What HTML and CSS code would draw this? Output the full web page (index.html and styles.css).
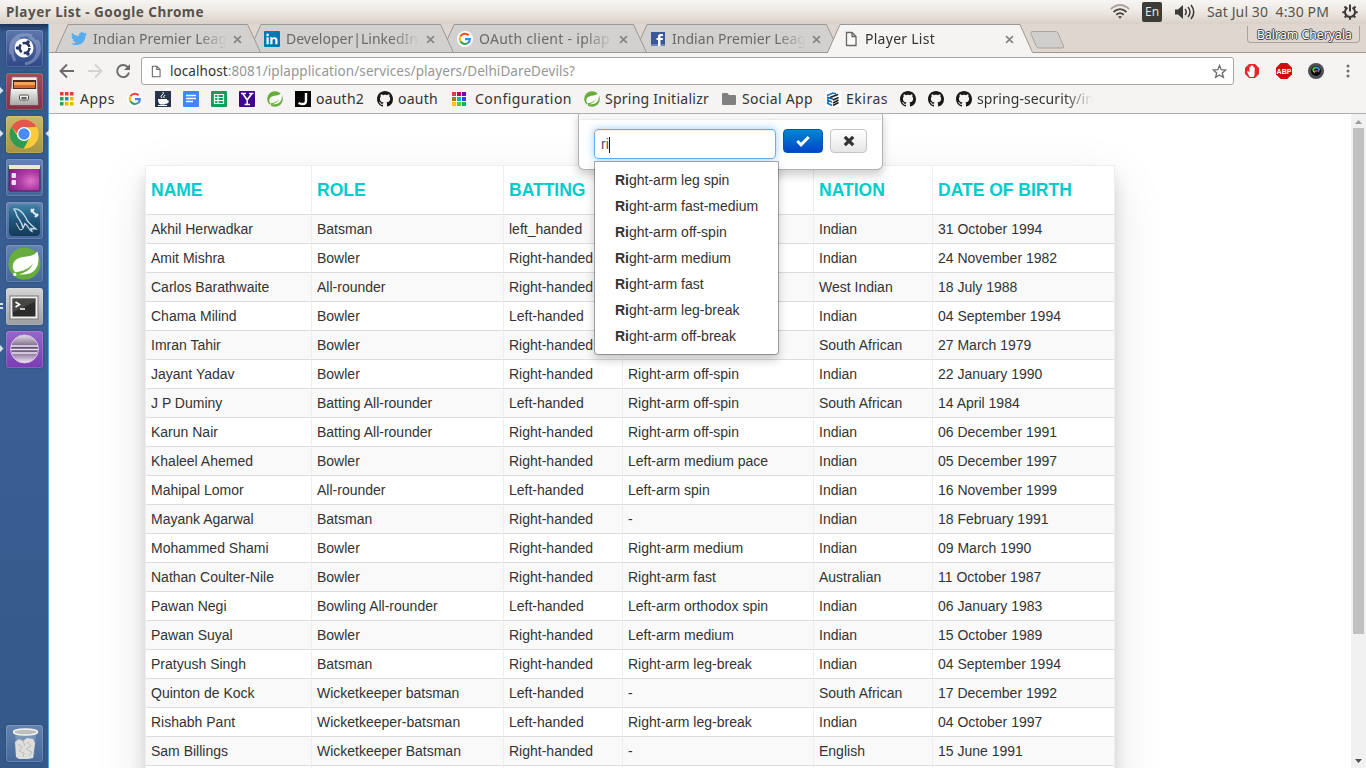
FILE: index.html
```html
<!DOCTYPE html>
<html lang="en">
<head>
<meta charset="utf-8">
<title>Player List</title>
<link rel="stylesheet" href="styles.css">
</head>
<body>
<svg class="defs" width="0" height="0">
  <defs>
    <linearGradient id="gSilver" x1="0" y1="0" x2="0" y2="1"><stop offset="0" stop-color="#f2f2f0"/><stop offset="1" stop-color="#a9a9a7"/></linearGradient>
    <radialGradient id="gPurple" cx=".7" cy=".6" r=".7"><stop offset="0" stop-color="#dc74c8"/><stop offset=".5" stop-color="#b03aa6"/><stop offset="1" stop-color="#86248c"/></radialGradient>
    <linearGradient id="gSea" x1="0" y1="0" x2="0" y2="1"><stop offset="0" stop-color="#3d82a6"/><stop offset=".5" stop-color="#1f5478"/><stop offset="1" stop-color="#143b58"/></linearGradient>
    <linearGradient id="gEcl" x1="0" y1="0" x2="0" y2="1"><stop offset="0" stop-color="#e4dbea"/><stop offset=".3" stop-color="#94869f"/><stop offset=".5" stop-color="#55456b"/><stop offset=".75" stop-color="#a894b6"/><stop offset="1" stop-color="#f3eaf6"/></linearGradient>
    <symbol id="github" viewBox="0 0 16 16"><path fill="#1b1817" d="M8 0C3.58 0 0 3.58 0 8c0 3.54 2.29 6.53 5.47 7.59.4.07.55-.17.55-.38 0-.19-.01-.82-.01-1.49-2.01.37-2.53-.49-2.69-.94-.09-.23-.48-.94-.82-1.13-.28-.15-.68-.52-.01-.53.63-.01 1.08.58 1.23.82.72 1.21 1.87.87 2.33.66.07-.52.28-.87.51-1.07-1.78-.2-3.64-.89-3.64-3.95 0-.87.31-1.59.82-2.15-.08-.2-.36-1.02.08-2.12 0 0 .67-.21 2.2.82.64-.18 1.32-.27 2-.27s1.36.09 2 .27c1.53-1.04 2.2-.82 2.2-.82.44 1.1.16 1.92.08 2.12.51.56.82 1.27.82 2.15 0 3.07-1.87 3.75-3.65 3.95.29.25.54.73.54 1.48 0 1.07-.01 1.93-.01 2.2 0 .21.15.46.55.38A8.01 8.01 0 0 0 16 8c0-4.42-3.58-8-8-8z"/></symbol>
    <symbol id="google" viewBox="0 0 16 16"><circle cx="8" cy="8" r="8" fill="#fff"/><path d="M3.5 5.2A5.2 5.2 0 0 1 11.6 4.3" fill="none" stroke="#ea4335" stroke-width="2.1"/><path d="M3.4 10.3A5.2 5.2 0 0 1 3.5 5.2" fill="none" stroke="#fbbc05" stroke-width="2.1"/><path d="M3.4 10.3A5.2 5.2 0 0 0 11.2 11.8" fill="none" stroke="#34a853" stroke-width="2.1"/><path d="M11.2 11.9A5 5 0 0 0 12.9 8.1H8" fill="none" stroke="#4285f4" stroke-width="2.1"/></symbol>
    <symbol id="spring" viewBox="0 0 16 16"><circle cx="8" cy="8" r="7.8" fill="#67ad3c"/><path fill="#fff" d="M14.2 2C12.800 4.300 10.600 4.400 7.300 4.800 3.900 5.300 2.200 7.200 2.300 9.700c.1 1.200.6 2 1.300 2.600 4.400-.6 6.800-2 8.700-4.500-1.600 3.500-4.200 4.900-7 5.400 4.400.5 8.100-.8 9.100-4.600.6-2.300.5-4.500-.2-6.600z"/><circle cx="3.300" cy="13.300" r=".8" fill="#fff"/></symbol>
    <symbol id="page" viewBox="0 0 12 16"><path d="M1.5 1.500h5.500l4 4v9h-9.500zM7 1.500v4h4" fill="#fff" fill-opacity=".6" stroke="#666" stroke-width="1.300"/></symbol>
    <symbol id="close" viewBox="0 0 10 10"><path d="M1.200 1.200l7.600 7.600M8.800 1.200l-7.600 7.600" stroke="#858585" stroke-width="1.800"/></symbol>
    <symbol id="tabshape" viewBox="0 0 206 30"><path d="M.5 28.500L13 .5H192.500L205.500 28.500z" fill="#d3d1cf" stroke="#9d9791"/></symbol>
  </defs>
</svg>

<header class="panel">
  <b class="panel-title" data-w="198">Player List - Google Chrome</b>
  <div class="tray">
    <svg class="wifi" width="20" height="16" viewBox="0 0 20 16" fill="none" stroke-width="1.800"><path d="M.8 5Q10-3 19.200 5" stroke="#a9a39b"/><path d="M3.500 8Q10 2.300 16.500 8" stroke="#4b4945"/><path d="M6.300 10.700Q10 7.500 13.700 10.700" stroke="#3c3b37"/><path d="M8 12.300h4l-2 2.500z" fill="#3c3b37"/></svg>
    <span class="lang">En</span>
    <svg class="sound" width="21" height="16" viewBox="0 0 21 16"><path d="M0 5.500h3l5-4.500v14l-5-4.500h-3z" fill="#3c3b37"/><path d="M10 5q2.500 3 0 6M13 3q4 5 0 10M16 1q5.500 7 0 14" fill="none" stroke="#3c3b37" stroke-width="1.500"/></svg>
    <span class="clock" data-w="122">Sat Jul 30&nbsp; 4:30 PM</span>
    <svg class="gear" width="16" height="16" viewBox="0 0 16 16" fill="none" stroke="#3c3b37"><path d="M5.500 3.700A5 5 0 1 0 10.500 3.700" stroke-width="2"/><path d="M8 .5v7" stroke-width="2"/><path d="M2.500 2.500l2 2M13.500 2.500l-2 2M.3 8.300h2.500M15.700 8.300h-2.500M2.700 13.500l2-2M13.300 13.500l-2-2M8 15.800v-3" stroke-width="2"/></svg>
  </div>
</header>

<div class="desktop">
  <nav class="launcher">
    <div class="app dash"><svg width="37" height="37" viewBox="0 0 37 37"><g fill="none" stroke="#b8c6e2" stroke-opacity=".4" stroke-width="3"><path d="M5 24C2 9 13 2 26 6M31 10c6 10 0 22-12 24M9 31C4 22 6 12 14 8M23 7c9 3 11 14 6 21"/></g><circle cx="18" cy="18" r="9.500" fill="#fff"/><circle cx="18.500" cy="18" r="5" fill="none" stroke="#273466" stroke-width="2.600" stroke-dasharray="8.500 2"/><circle cx="11.500" cy="18" r="1.800" fill="#273466"/><circle cx="22" cy="12" r="1.800" fill="#273466"/><circle cx="22" cy="24" r="1.800" fill="#273466"/></svg></div>
    <div class="app files"><svg width="37" height="37" viewBox="0 0 37 37"><path d="M6 4h25l1 28H4z" fill="url(#gSilver)" stroke="#777" stroke-width=".7"/><path d="M7 7h23v9H7z" fill="#4a2c20"/><path d="M8 9h21v3H8z" fill="#f3a35c"/><path d="M8 12h21v3H8z" fill="#e0641c"/><path d="M5 16h26l1 16H4z" fill="url(#gSilver)"/><rect x="13.500" y="22" width="9" height="5" rx="1" fill="#efefef" stroke="#555"/><path d="M15.500 25h5" stroke="#333" stroke-width="1.500"/></svg></div>
    <div class="app chrome"><svg width="37" height="37" viewBox="0 0 37 37"><circle cx="18" cy="18" r="14.500" fill="#fbcb39"/><path d="M5.500 10.700A14.500 14.500 0 0 1 30.500 10.700L18.500 12l-7 6z" fill="#e2574c"/><path d="M5.500 10.700A14.500 14.500 0 0 0 18 32.500l5.500-10L12 21z" fill="#2f9b52"/><path d="M18 11.500h13a14.500 14.500 0 0 1-13 21l6-11z" fill="#fbcb39"/><circle cx="18" cy="18" r="7" fill="#fff"/><circle cx="18" cy="18" r="5.700" fill="#4a8af4"/></svg></div>
    <div class="app"><svg width="37" height="37" viewBox="0 0 37 37"><rect x="3" y="7" width="31" height="25" rx="1" fill="url(#gPurple)" stroke="#45204f"/><path d="M3 6h31v4H3z" fill="#ede9cf"/><path d="M6 14.500h3.500v4H6zM6 21.500h3.500v4H6z" fill="#f0d9ed" stroke="#fff" stroke-width=".7"/></svg></div>
    <div class="app"><svg width="37" height="37" viewBox="0 0 37 37"><rect x="3" y="3" width="31" height="31" rx="4" fill="url(#gSea)"/><path d="M8 7c4-1 9 3 12 9 1 4 4 6 10 11l-5-.5 1 3c-3-1-4-6-7-8-1 3-1 2-2 5-1-7-3-7-5-11-3-4-1-5-4-8z" fill="none" stroke="#c5d9e8" stroke-width="1.300"/><path d="M10 21l4 7 3-1" fill="none" stroke="#c5d9e8"/><path d="M25 7l3 4 4 3M25 10l3-3M29 15l3-3" stroke="#e2ecf2" stroke-width="2"/></svg></div>
    <div class="app"><svg width="33" height="33"><use href="#spring" width="33" height="33"/></svg></div>
    <div class="app terminal"><svg width="37" height="37" viewBox="0 0 37 37"><rect x="4" y="8" width="28" height="23" fill="#f0f0ee" stroke="#777"/><rect x="6.500" y="10.500" width="23" height="18" fill="#2b2b2a"/><path d="M6.500 10.500h23v3l-23 11z" fill="#555" opacity=".65"/><path d="M9.500 14l4 2.500-4 2.500M14 21h5" fill="none" stroke="#fff" stroke-width="1.600"/></svg></div>
    <div class="app eclipse"><svg width="37" height="37" viewBox="0 0 37 37"><circle cx="18.500" cy="18" r="14" fill="url(#gEcl)" stroke="#d6c2e2"/><path d="M5 15h27M5 18.500h27M6 22h25" stroke="#eee3f5" stroke-width="1.500"/></svg></div>
    <div class="app trash"><svg width="37" height="37" viewBox="0 0 37 37"><path d="M9 8h21l-2 25H11z" fill="#c7d5dd" fill-opacity=".3"/><path d="M9 17l4-3 4 2 4-3 6 1 2 4-2 15-5 1H13l-3-2z" fill="#dedfdc"/><path d="M12 19l4 3-3 4 5 2-1 4M21 17l4 4-5 3 6 3-3 4M17 16l2 5" stroke="#b9bcb9" fill="none"/><ellipse cx="19.500" cy="7" rx="12" ry="3" fill="#bcc0bd" stroke="#f4f4f0" stroke-width="1.500"/></svg></div>
    <svg class="marks" width="49" height="744" viewBox="0 0 49 744" fill="#d8e2ee"><path d="M0 63l3.500 3.500L0 70zM0 106l3.500 3.500L0 113zM49 106l-3.500 3.500L49 113zM0 279h3v2H0zM0 283h3v2H0zM0 321l3.500 3.500L0 328z"/></svg>
  </nav>

  <main class="browser">
    <div class="tabs">
      <div class="tab t1"><svg class="shape"><use href="#tabshape"/></svg><svg class="fav" viewBox="0 0 16 16"><path fill="#55acee" d="M16 3.500l-1.700 1.600c.3 5-3.700 9-8.700 9-2 0-3.800-.5-5.600-1.500 2 .1 3.500-.3 4.900-1.400-1.500-.1-2.500-.9-3-2.200h1.300C1.600 8.500.7 7.300.7 5.700l1.400.4C.7 4.900.3 3.200 1.200 1.700 3 3.800 5.200 5 8 5.100 7.500 3 9 1.200 11 1.200c1 0 1.800.4 2.400 1l2-.8-1.300 1.800z"/></svg><span class="label"><span data-w="134">Indian Premier Leag</span></span><svg class="x"><use href="#close"/></svg></div>
      <div class="tab t2"><svg class="shape"><use href="#tabshape"/></svg><svg class="fav" viewBox="0 0 16 16"><rect width="16" height="16" rx="1" fill="#0077b5"/><path d="M2.500 6.300h2.200v7H2.500zM6.300 6.300h2v1C9.500 5.600 13.500 5.700 13.500 9v4.300h-2.200V9.500c0-2-2.800-2-2.800 0v3.800H6.300z" fill="#fff"/><circle cx="3.600" cy="3.900" r="1.300" fill="#fff"/></svg><span class="label"><span data-w="132">Developer|LinkedIn</span></span><svg class="x"><use href="#close"/></svg></div>
      <div class="tab t3"><svg class="shape"><use href="#tabshape"/></svg><svg class="fav"><use href="#google"/></svg><span class="label"><span data-w="131">OAuth client - iplap</span></span><svg class="x"><use href="#close"/></svg></div>
      <div class="tab t4"><svg class="shape"><use href="#tabshape"/></svg><svg class="fav" viewBox="0 0 16 16"><rect x="1" y="1" width="14" height="14" fill="#3b5998"/><path d="M1 13h14v2H1z" fill="#6d84b4"/><path d="M8 15V9H6.500V7H8V5.500Q8 3 10.500 3H13v2h-1.500Q10.500 5 10.500 6v1H13l-.3 2h-2.200v6z" fill="#fff"/></svg><span class="label"><span data-w="134">Indian Premier Leag</span></span><svg class="x"><use href="#close"/></svg></div>
      <div class="tab t5"><svg class="shape" viewBox="0 0 206 30"><path d="M.5 29.500L13 .5H193L206 29.500z" fill="#f5f4f2"/><path d="M.5 28.500L13 .5H193L205.500 28.500" fill="none" stroke="#9d9791"/></svg><svg class="fav"><use href="#page"/></svg><span class="label active"><span data-w="70">Player List</span></span><svg class="x"><use href="#close"/></svg></div>
      <svg class="newtab" width="35" height="18" viewBox="0 0 35 18"><path d="M2.500.5H25Q27 .5 28 2l5.500 13Q34 17 32 17H9Q7 17 6.500 15.500L.8 2.500Q.5.5 2.500.5z" fill="#d0cfcd" stroke="#aba49e"/></svg>
      <div class="user" data-w="95">Balram Cheryala</div>
    </div>

    <div class="toolbar">
      <svg class="back" width="16" height="16" viewBox="0 0 16 16"><path d="M15 8H2M8 1.500L1.500 8 8 14.500" fill="none" stroke="#6b6b6b" stroke-width="1.900"/></svg>
      <svg class="fwd" width="16" height="16" viewBox="0 0 16 16"><path d="M1 8h13M8 1.500L14.500 8 8 14.500" fill="none" stroke="#d4d3d1" stroke-width="1.900"/></svg>
      <svg class="reload" width="16" height="16" viewBox="0 0 16 16"><path d="M13 4.500A6 6 0 1 0 14 9.500" fill="none" stroke="#6b6b6b" stroke-width="1.900"/><path d="M15 1v6H9z" fill="#6b6b6b"/></svg>
      <div class="omnibox">
        <svg width="10" height="13"><use href="#page" width="10" height="13"/></svg>
        <span class="url" data-w="405"><i>localhost</i>:8081/iplapplication/services/players/DelhiDareDevils?</span>
        <svg class="star" width="15" height="15" viewBox="0 0 15 15"><path d="M7.500 1.500l1.700 4.200 4.500.3-3.400 2.900 1.100 4.400-3.900-2.400-3.900 2.400 1.100-4.400L1.300 6l4.500-.3z" fill="none" stroke="#6b6b6b" stroke-width="1.300"/></svg>
      </div>
      <svg class="ext" width="16" height="16" viewBox="0 0 16 16"><path d="M5 1h6l4 4v6l-4 4H5l-4-4V5z" fill="#e8242b"/><path d="M5 13L3 8.500l1-.5 1.500 1.500V4q.7-1 1.300 0V2.800q.7-1 1.300 0V3q.7-1 1.300 0v1.500q1-.8 1.300.2L10.500 12l-1 2H6z" fill="#fff"/></svg>
      <svg class="ext" width="16" height="16" viewBox="0 0 16 16"><path d="M4.700 0h6.600L16 4.700v6.600L11.300 16H4.700L0 11.300V4.700z" fill="#d00b0b"/><text x="8" y="10.500" text-anchor="middle" class="abp">ABP</text></svg>
      <svg class="ext" width="16" height="16" viewBox="0 0 16 16"><circle cx="8" cy="8" r="8" fill="#4c4f54"/><circle cx="8" cy="8" r="5" fill="#090909"/><path d="M5 7.500Q5.500 4.500 8 4.600" stroke="#3cc34b" stroke-width="2" fill="none"/><path d="M8 4.600q3 .2 3.300 3" stroke="#368be5" stroke-width="2" fill="none"/><path d="M7 8.500q2-2 4 .5" stroke="#d147b1" stroke-width="1.300" fill="none"/><path d="M5 7.500l2 2" stroke="#e5c72e" stroke-width="1.300"/></svg>
      <svg class="dots" width="4" height="14" viewBox="0 0 4 14" fill="#707070"><circle cx="2" cy="2" r="1.500"/><circle cx="2" cy="7" r="1.500"/><circle cx="2" cy="12" r="1.500"/></svg>
    </div>

    <div class="bookmarks">
      <div class="bm b-apps"><svg viewBox="0 0 16 16"><path d="M1 1h3.500v3.500H1zM6 1h3.500v3.500H6zM11 1h3.500v3.500H11z" fill="#e53d32"/><path d="M1 6h3.500v3.500H1z" fill="#2e9e5b"/><path d="M6 6h3.500v3.500H6z" fill="#2f80e7"/><path d="M11 6h3.500v3.500H11zM6 11h3.500v3.500H6zM11 11h3.500v3.500H11z" fill="#f4b400"/><path d="M1 11h3.500v3.500H1z" fill="#2e9e5b"/></svg><span data-w="35">Apps</span></div>
      <div class="bm"><svg><use href="#google"/></svg></div>
      <div class="bm"><svg viewBox="0 0 16 16"><rect width="16" height="16" fill="#263648"/><path d="M3 8h9v1q2.500 0 1.500 2.500-1 1.500-2.500 1-1 1-2 1H6Q3 13 3 8zM3 14h9v1H3z" fill="#fff"/><path d="M7 7q-2-2 0-3t1-3M9 7q-1-1 1-3" stroke="#fff" fill="none"/></svg></div>
      <div class="bm"><svg viewBox="0 0 16 16"><rect width="16" height="16" rx="1" fill="#4285f4"/><path d="M3 4.500h10M3 7.500h10M3 10.500h7" stroke="#fff" stroke-width="1.300"/></svg></div>
      <div class="bm"><svg viewBox="0 0 16 16"><rect width="16" height="16" rx="1" fill="#169c5b"/><path d="M3.500 3.500h9v9h-9zM3.500 6.500h9M3.500 9.500h9M7 3.500v9" stroke="#fff" stroke-width="1.200" fill="none"/></svg></div>
      <div class="bm"><svg viewBox="0 0 16 16"><rect width="16" height="16" rx="1" fill="#400090"/><path d="M2 2.500h5M10 2.500h4.500M4 3l4.200 6L12.500 3M8.200 8.500v5M5.500 13.500h5.500" stroke="#fff" stroke-width="1.600" fill="none"/></svg></div>
      <div class="bm"><svg><use href="#spring"/></svg></div>
      <div class="bm b-oauth2"><svg viewBox="0 0 16 16"><rect width="16" height="16" fill="#050505"/><path d="M11 2v7.500q0 4-4 3.500-1.500 0-3.500-1" stroke="#fff" stroke-width="2.400" fill="none"/></svg><span data-w="48">oauth2</span></div>
      <div class="bm b-oauth"><svg><use href="#github"/></svg><span data-w="40">oauth</span></div>
      <div class="bm b-config"><svg viewBox="0 0 16 16"><path d="M1 1h4v4H1z" fill="#e53946"/><path d="M6 1h4v4H6z" fill="#bf0070"/><path d="M11 1h4v4h-4z" fill="#7a00c2"/><path d="M1 6h4v4H1z" fill="#c56d00"/><path d="M6 6h4v4H6z" fill="#22a5d4"/><path d="M11 6h4v4h-4z" fill="#423bdd"/><path d="M1 11h4v4H1z" fill="#ffc400"/><path d="M6 11h4v4H6z" fill="#43d93b"/><path d="M11 11h4v4h-4z" fill="#08b371"/></svg><span data-w="97">Configuration</span></div>
      <div class="bm b-init"><svg><use href="#spring"/></svg><span data-w="104">Spring Initializr</span></div>
      <div class="bm b-social"><svg viewBox="0 0 16 16"><path d="M1 3q0-1 1-1h4.500L8 4h6q1 0 1 1v8q0 1-1 1H2q-1 0-1-1z" fill="#808080"/></svg><span data-w="71">Social App</span></div>
      <div class="bm b-ekiras"><svg viewBox="0 0 16 16"><rect width="16" height="16" fill="#fff"/><path d="M2 4.500L8 2l3 1M2 6l5 2 1-.5M2 9l5 2M2 12l5 2.500M3 6v6" stroke="#176fb5" stroke-width="1.500" fill="none"/><path d="M5 6.500l8-3M8 9l5.500-2.500M8 12l5.500-3M8 14.500l5.500-3" stroke="#222" stroke-width="1.500" fill="none"/></svg><span data-w="42">Ekiras</span></div>
      <div class="bm"><svg><use href="#github"/></svg></div>
      <div class="bm"><svg><use href="#github"/></svg></div>
      <div class="bm b-sec"><svg><use href="#github"/></svg><span data-w="117">spring-security/in</span></div>
    </div>

    <section class="page">
      <div class="content">
        <table class="players">
          <colgroup><col class="c1"><col class="c2"><col class="c3"><col class="c4"><col class="c5"><col class="c6"></colgroup>
          <thead><tr><th>NAME</th><th>ROLE</th><th>BATTING</th><th></th><th>NATION</th><th>DATE OF BIRTH</th></tr></thead>
          <tbody>
            <tr><td>Akhil Herwadkar</td><td>Batsman</td><td>left_handed</td><td></td><td>Indian</td><td>31 October 1994</td></tr>
            <tr><td>Amit Mishra</td><td>Bowler</td><td>Right-handed</td><td></td><td>Indian</td><td>24 November 1982</td></tr>
            <tr><td>Carlos Barathwaite</td><td>All-rounder</td><td>Right-handed</td><td></td><td>West Indian</td><td>18 July 1988</td></tr>
            <tr><td>Chama Milind</td><td>Bowler</td><td>Left-handed</td><td></td><td>Indian</td><td>04 September 1994</td></tr>
            <tr><td>Imran Tahir</td><td>Bowler</td><td>Right-handed</td><td></td><td>South African</td><td>27 March 1979</td></tr>
            <tr><td>Jayant Yadav</td><td>Bowler</td><td>Right-handed</td><td>Right-arm off-spin</td><td>Indian</td><td>22 January 1990</td></tr>
            <tr><td>J P Duminy</td><td>Batting All-rounder</td><td>Left-handed</td><td>Right-arm off-spin</td><td>South African</td><td>14 April 1984</td></tr>
            <tr><td>Karun Nair</td><td>Batting All-rounder</td><td>Right-handed</td><td>Right-arm off-spin</td><td>Indian</td><td>06 December 1991</td></tr>
            <tr><td>Khaleel Ahemed</td><td>Bowler</td><td>Right-handed</td><td>Left-arm medium pace</td><td>Indian</td><td>05 December 1997</td></tr>
            <tr><td>Mahipal Lomor</td><td>All-rounder</td><td>Left-handed</td><td>Left-arm spin</td><td>Indian</td><td>16 November 1999</td></tr>
            <tr><td>Mayank Agarwal</td><td>Batsman</td><td>Right-handed</td><td>-</td><td>Indian</td><td>18 February 1991</td></tr>
            <tr><td>Mohammed Shami</td><td>Bowler</td><td>Right-handed</td><td>Right-arm medium</td><td>Indian</td><td>09 March 1990</td></tr>
            <tr><td>Nathan Coulter-Nile</td><td>Bowler</td><td>Right-handed</td><td>Right-arm fast</td><td>Australian</td><td>11 October 1987</td></tr>
            <tr><td>Pawan Negi</td><td>Bowling All-rounder</td><td>Left-handed</td><td>Left-arm orthodox spin</td><td>Indian</td><td>06 January 1983</td></tr>
            <tr><td>Pawan Suyal</td><td>Bowler</td><td>Right-handed</td><td>Left-arm medium</td><td>Indian</td><td>15 October 1989</td></tr>
            <tr><td>Pratyush Singh</td><td>Batsman</td><td>Right-handed</td><td>Right-arm leg-break</td><td>Indian</td><td>04 September 1994</td></tr>
            <tr><td>Quinton de Kock</td><td>Wicketkeeper batsman</td><td>Left-handed</td><td>-</td><td>South African</td><td>17 December 1992</td></tr>
            <tr><td>Rishabh Pant</td><td>Wicketkeeper-batsman</td><td>Left-handed</td><td>Right-arm leg-break</td><td>Indian</td><td>04 October 1997</td></tr>
            <tr><td>Sam Billings</td><td>Wicketkeeper Batsman</td><td>Right-handed</td><td>-</td><td>English</td><td>15 June 1991</td></tr>
            <tr><td></td><td></td><td></td><td></td><td></td><td></td></tr>
          </tbody>
        </table>
        <div class="popover">
          <div class="popover-title"></div>
          <div class="edit">
            <div class="input">ri<span class="caret"></span></div>
            <button class="ok"><svg width="14" height="12" viewBox="0 0 14 12"><path d="M1.300 6l3.700 3.800L12.700 2" fill="none" stroke="#fff" stroke-width="3"/></svg></button>
            <button class="cancel"><svg width="12" height="12" viewBox="0 0 12 12"><path d="M1.800 1.800l8.400 8.400M10.200 1.800l-8.400 8.400" stroke="#333" stroke-width="3.200"/></svg></button>
          </div>
        </div>
        <ul class="menu">
          <li><b>Ri</b>ght-arm leg spin</li>
          <li><b>Ri</b>ght-arm fast-medium</li>
          <li><b>Ri</b>ght-arm off-spin</li>
          <li><b>Ri</b>ght-arm medium</li>
          <li><b>Ri</b>ght-arm fast</li>
          <li><b>Ri</b>ght-arm leg-break</li>
          <li><b>Ri</b>ght-arm off-break</li>
        </ul>
      </div>
      <div class="scrollbar">
        <svg width="7" height="4" viewBox="0 0 7 4"><path d="M0 4L3.500 0 7 4z" fill="#9b9b9b"/></svg>
        <div class="thumb"></div>
        <svg width="7" height="4" viewBox="0 0 7 4"><path d="M0 0h7L3.500 4z" fill="#505050"/></svg>
      </div>
    </section>
  </main>
</div>
<script src="fit.js"></script>
</body>
</html>
```

FILE: styles.css
```css
* { box-sizing: border-box; }
body { margin: 0; width: 1366px; height: 768px; overflow: hidden; display: flex; flex-direction: column; background: #fff; font-family: "Liberation Sans", Arial, sans-serif; font-size: 14px; line-height: 20px; color: #333; }
svg { display: block; flex: none; }
.defs { position: absolute; }
[data-w] { white-space: nowrap; }

/* Top panel */
.panel { height: 24px; flex: none; display: flex; align-items: center; justify-content: space-between; padding: 0 8px 0 6px; background: linear-gradient(#f7f5f3, #ece7e2 50%, #d9d0c7); color: #57534c; font: 14px/24px "Noto Sans", sans-serif; }
.panel-title { font-size: 13.5px; }
.tray { display: flex; align-items: center; }
.lang { margin: 0 13px 0 12px; width: 20px; height: 20px; border-radius: 2px; background: #3c3b37; color: #e9e5df; font-size: 12px; line-height: 20px; text-align: center; }
.clock { margin: 0 13px 0 11px; width: 122px; }

.desktop { flex: 1; min-height: 0; display: flex; }

/* Launcher */
.launcher { position: relative; width: 49px; flex: none; padding: 6px 0 6px 6px; display: flex; flex-direction: column; gap: 6px; background: linear-gradient(#1c3358, #35598c 8px, #3a5f94 50%, #345888); border-right: 1px solid #5aa5d8; }
.app { width: 37px; height: 37px; flex: none; display: flex; align-items: center; justify-content: center; border-radius: 3px; background: linear-gradient(#6583b0, #45689b); box-shadow: inset 0 0 0 1px rgba(255,255,255,.16), 0 0 2px rgba(0,0,0,.3); }
.dash { background: linear-gradient(#5d77ae, #2f4787); }
.files { background: linear-gradient(#a34d5c, #7e3444); }
.chrome { background: linear-gradient(#cdb76c, #a99344); }
.terminal { background: linear-gradient(#d5d5d5, #9c9ea1); }
.eclipse { background: linear-gradient(#9865c9, #7a3cb4); }
.trash { margin-top: auto; }
.marks { position: absolute; left: 0; top: 0; }

/* Browser frame */
.browser { flex: 1; min-width: 0; display: flex; flex-direction: column; }
.tabs { height: 29px; flex: none; display: flex; padding-left: 6px; background: #dfd6cf; box-shadow: inset 0 -1px #9d9791; font: 14px/27px "Noto Sans", sans-serif; color: #6b6967; }
.tab { position: relative; width: 206px; height: 29px; flex: none; margin-right: -13px; padding: 1px 15px 0 16px; display: flex; align-items: center; }
.shape { position: absolute; left: 0; top: 0; width: 206px; height: 30px; }
.fav { position: relative; width: 16px; height: 16px; margin-right: 6px; }
.label { position: relative; flex: none; width: 134px; height: 29px; overflow: hidden; -webkit-mask-image: linear-gradient(90deg, #000 105px, transparent 134px); }
.label.active { color: #333; }
.x { position: relative; width: 9px; height: 9px; margin-left: 6px; }
.t1 { z-index: 5; } .t2 { z-index: 4; } .t3 { z-index: 3; } .t4 { z-index: 2; } .t5 { z-index: 6; }
.newtab { margin: 7px 0 0 10px; }
.user { margin: 2px 6px 0 auto; width: 113px; height: 17px; padding-left: 9px; border: 1px solid #aaa29b; border-top: 0; border-radius: 0 0 4px 4px; line-height: 17px; font-size: 12px; color: #fff; text-shadow: 1px 0 #444, -1px 0 #444, 0 1px #444, 0 -1px #444; }

.toolbar { height: 33px; flex: none; display: flex; align-items: center; padding: 3px 16px 0 10px; background: #f5f4f2; }
.fwd { margin-left: 12px; }
.reload { margin-left: 12px; }
.omnibox { margin: 0 10px 0 10px; width: 1093px; height: 28px; border: 1px solid #aaa6a2; border-radius: 3px; background: #fff; display: flex; align-items: center; padding: 0 6px 0 9px; }
.url { margin-left: 9px; font: 13.5px/26px "Noto Sans", sans-serif; color: #969696; }
.url i { font-style: normal; color: #333; }
.star { margin-left: auto; }
.ext { margin-right: 16px; }
.dots { margin-left: 6px; }
.abp { font: bold 7px "Liberation Sans", sans-serif; fill: #fff; }

.bookmarks { height: 28px; flex: none; display: flex; align-items: center; padding: 0 0 1px 10px; background: #f5f4f2; border-bottom: 1px solid #b0aeac; font: 14px/26px "Noto Sans", sans-serif; color: #333; }
.bm { width: 28px; flex: none; display: flex; align-items: center; }
.bm svg { width: 16px; height: 16px; margin-right: 5px; }
.b-apps { width: 68px; }
.b-oauth2 { width: 82px; }
.b-oauth { width: 74px; }
.b-config { width: 133px; }
.b-config svg { margin-right: 8px; }
.b-init { width: 137px; }
.b-social { width: 104px; }
.b-ekiras { width: 75px; }
.b-sec { width: 138px; overflow: hidden; -webkit-mask-image: linear-gradient(90deg, #000 108px, transparent 137px); }

/* Page */
.page { flex: 1; min-height: 0; display: flex; background: #fff; }
.content { position: relative; flex: 1; overflow: hidden; padding: 51px 0 0 96px; }
.players { width: 970px; table-layout: fixed; border-collapse: separate; border-spacing: 0; border: 1px solid #eee; background: #fff; box-shadow: 0 12px 15px rgba(0,0,0,.14), 0 17px 50px rgba(0,0,0,.1); }
.c1 { width: 165px; } .c2 { width: 192px; } .c3 { width: 119px; } .c4 { width: 191px; } .c5 { width: 119px; }
.players th { height: 48px; padding: 0 5px; text-align: left; font-size: 17.5px; line-height: 48px; color: #00cccc; border-left: 1px solid #eee; white-space: nowrap; }
.players td { height: 29px; padding: 4px 5px; border-top: 1px solid #ddd; border-left: 1px solid #eee; white-space: nowrap; }
.players th:first-child, .players td:first-child { border-left: 0; }
.players tbody tr:nth-child(odd) td { background: #f9f9f9; }

.popover { position: absolute; left: 529px; top: -4px; width: 305px; height: 60px; padding: 1px; background: #fff; border: 1px solid rgba(0,0,0,.3); border-radius: 6px; box-shadow: 0 5px 10px rgba(0,0,0,.2); }
.popover-title { height: 8px; background: #f7f7f7; border-bottom: 1px solid #ebebeb; }
.edit { display: flex; align-items: flex-start; padding: 9px 14px; }
.input { width: 182px; height: 30px; padding: 4px 6px; display: flex; border: 1px solid #66afe9; border-radius: 4px; color: #555; box-shadow: inset 0 1px 1px rgba(0,0,0,.075), 0 0 8px rgba(82,168,236,.6); }
.caret { width: 1px; height: 16px; margin-top: 3px; background: #111; }
.edit button { height: 24px; padding: 0; border-radius: 4px; display: flex; align-items: center; justify-content: center; }
.ok { width: 40px; margin-left: 7px; border: 1px solid #0055bb; background: linear-gradient(#0088cc, #0044cc); }
.cancel { width: 37px; margin-left: 7px; border: 1px solid #c5c5c5; background: linear-gradient(#fff, #e6e6e6); }
.menu { position: absolute; left: 545px; top: 47px; margin: 0; padding: 5px 0; width: 185px; list-style: none; background: #fff; background-clip: padding-box; border: 1px solid rgba(0,0,0,.3); border-radius: 0 0 4px 4px; box-shadow: 0 5px 10px rgba(0,0,0,.2); }
.menu li { padding: 3px 20px; white-space: nowrap; }

.scrollbar { width: 15px; flex: none; display: flex; flex-direction: column; align-items: center; padding: 6px 0 5px; background: #f1f1f1; }
.thumb { width: 11px; height: 506px; margin: 4px 0 auto; background: #c1c1c1; }
```

FILE: fit.js
```js
// Spread each label's letters so that it takes its nominal width.
document.querySelectorAll('[data-w]').forEach(function (el) {
  var range = document.createRange();
  range.selectNodeContents(el);
  var gap = (Number(el.dataset.w) - range.getBoundingClientRect().width) / el.textContent.length;
  el.style.letterSpacing = gap.toFixed(3) + 'px';
});
```
